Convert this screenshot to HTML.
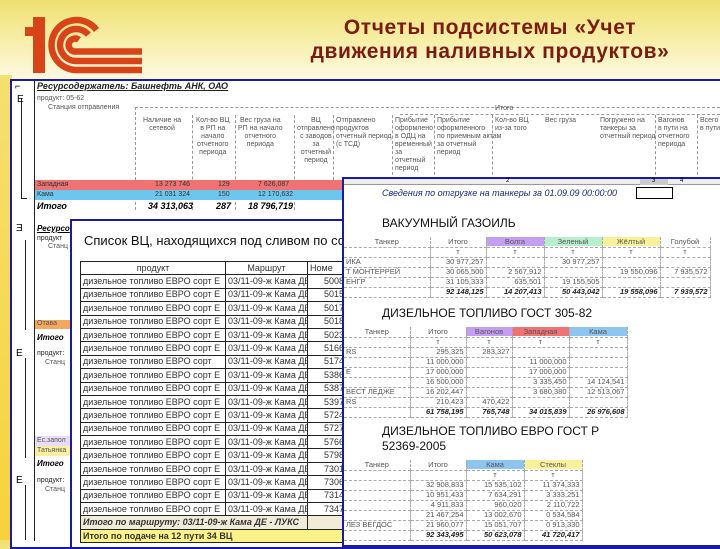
<!DOCTYPE html>
<html><head><meta charset="utf-8"><style>
*{margin:0;padding:0;box-sizing:border-box}
body{width:720px;height:540px;overflow:hidden;position:relative;font-family:"Liberation Sans",sans-serif;background:linear-gradient(180deg,#efe071 0%,#f7eea8 40px,#fcf8dc 75px,#fdf9e0 100%)}
.a{position:absolute;white-space:nowrap}
.s{font-size:7px;color:#555;line-height:8px}
.win{position:absolute;background:#fff;border:2px solid #1a1aa8}
.dl{position:absolute;border-top:1px dashed #999}
.dv{position:absolute;border-left:1px dashed #999}
table{border-collapse:collapse}
.lt td{border:1px solid #222;height:13.4px;font-size:9px;color:#333;padding:0 2px;overflow:hidden;white-space:nowrap;line-height:11px}
.tt td{font-size:7.5px;color:#555;height:10px;border-bottom:1px dashed #aaa;border-right:1px dashed #aaa;text-align:right;padding:0 2px;white-space:nowrap;line-height:8px}
.tt td.b{font-weight:bold;font-style:italic;color:#222}
</style></head><body>
<div class="a" style="left:0;top:75px;width:12px;height:465px;background:linear-gradient(#f5e070,#f7d23c)"></div>
<!-- logo -->
<svg class="a" style="left:0;top:0" width="150" height="80" viewBox="0 0 150 80">
<g fill="#d9431a">
<rect x="25" y="27" width="14" height="9"/>
<rect x="33" y="17" width="12" height="56"/>
</g>
<g fill="none" stroke="#d9431a" stroke-width="6.5">
<path d="M96.5 30 A25 25 0 1 0 76 70 L142 70"/>
<path d="M88.3 34.7 A16 16 0 1 0 76 61 L142 61"/>
<path d="M79 39.8 A6.5 6.5 0 1 0 76 51.5 L142 51.5"/>
</g></svg>
<div class="a" style="left:260px;top:16px;width:460px;text-align:center;font-size:21px;font-weight:bold;color:#7a1c14;line-height:24px;white-space:normal;letter-spacing:0.6px">Отчеты подсистемы «Учет<br>движения наливных продуктов»</div>

<!-- window 1 -->
<div class="win" style="left:10px;top:79px;width:712px;height:470px"></div>
<div class="a" style="left:34px;top:81px;width:1px;height:460px;background:#222"></div>
<div class="a s" style="left:15px;top:82px;color:#000;font-size:9px">⌐</div>
<div class="a" style="left:21px;top:98px;width:1px;height:100px;background:#222"></div>
<div class="a" style="left:21px;top:198px;width:6px;height:1px;background:#222"></div>
<div class="a" style="left:17px;top:94px;font-size:10px">E</div>
<div class="a" style="left:37px;top:81px;font-size:9px;font-style:italic;font-weight:bold;text-decoration:underline;color:#222">Ресурсодержатель: Башнефть АНК, ОАО</div>
<div class="a s" style="left:37px;top:95px">продукт: 05-62</div>
<div class="a s" style="left:48px;top:104px">Станция отправления</div>
<div class="dl" style="left:135px;top:107px;width:585px"></div>
<div class="dl" style="left:400px;top:114px;width:320px"></div>
<div class="a s" style="left:495px;top:105px">Итого</div>
<div class="dv" style="left:135px;top:107px;height:103px"></div>
<div class="dv" style="left:192px;top:115px;height:95px"></div>
<div class="dv" style="left:235px;top:115px;height:95px"></div>
<div class="dv" style="left:294px;top:115px;height:95px"></div>
<div class="dv" style="left:333px;top:115px;height:65px"></div>
<div class="dv" style="left:392px;top:115px;height:65px"></div>
<div class="dv" style="left:434px;top:115px;height:65px"></div>
<div class="dv" style="left:492px;top:115px;height:65px"></div>
<div class="dv" style="left:655px;top:115px;height:65px"></div>
<div class="dv" style="left:697px;top:115px;height:65px"></div>
<div class="a s" style="left:143px;top:117px;text-align:center">Наличие на<br>сетевой</div>
<div class="a s" style="left:196px;top:117px;text-align:center">Кол-во ВЦ<br>в РП на<br>начало<br>отчетного<br>периода</div>
<div class="a s" style="left:238px;top:117px;text-align:center">Вес груза на<br>РП на начало<br>отчетного<br>периода</div>
<div class="a s" style="left:297px;top:117px;text-align:center">ВЦ<br>отправлено<br>с заводов<br>за<br>отчетный<br>период</div>
<div class="a s" style="left:336px;top:117px">Отправлено<br>продуктов<br>отчетный период<br>(с ТСД)</div>
<div class="a s" style="left:395px;top:117px">Прибытие<br>оформлено<br>в ОДЦ на<br>временный<br>за<br>отчетный<br>период</div>
<div class="a s" style="left:437px;top:117px">Прибытие<br>оформленного<br>по приемным актам<br>за отчетный<br>период</div>
<div class="a s" style="left:495px;top:117px">Кол-во ВЦ<br>из-за того</div>
<div class="a s" style="left:545px;top:117px">Вес груза</div>
<div class="a s" style="left:600px;top:117px">Погружено на<br>танкеры за<br>отчетный период</div>
<div class="a s" style="left:658px;top:117px">Вагонов<br>в пути на<br>отчетного<br>периода</div>
<div class="a s" style="left:700px;top:117px">Всего<br>в пути</div>
<div class="a" style="left:35px;top:180px;width:310px;height:10px;background:#f07272"></div>
<div class="a" style="left:35px;top:190px;width:310px;height:10px;background:#6cc6ee"></div>
<div class="a s" style="left:37px;top:181px;color:#333">Западная</div>
<div class="a s" style="left:155px;top:181px;color:#333">13 273 746</div>
<div class="a s" style="left:218px;top:181px;color:#333">129</div>
<div class="a s" style="left:258px;top:181px;color:#333">7 626,087</div>
<div class="a s" style="left:37px;top:191px;color:#333">Кама</div>
<div class="a s" style="left:155px;top:191px;color:#333">21 031 324</div>
<div class="a s" style="left:218px;top:191px;color:#333">150</div>
<div class="a s" style="left:258px;top:191px;color:#333">12 170,632</div>
<div class="a" style="left:37px;top:201px;font-size:9px;font-weight:bold;font-style:italic">Итого</div>
<div class="a" style="left:148px;top:201px;font-size:9px;font-weight:bold;font-style:italic">34 313,063</div>
<div class="a" style="left:216px;top:201px;font-size:9px;font-weight:bold;font-style:italic">287</div>
<div class="a" style="left:248px;top:201px;font-size:9px;font-weight:bold;font-style:italic">18 796,719</div>
<!-- lower left gutter -->
<div class="a" style="left:16px;top:223px;font-size:10px">Ǝ</div>
<div class="a" style="left:37px;top:224px;font-size:8px;font-weight:bold;font-style:italic;text-decoration:underline">Ресурсо</div>
<div class="a s" style="left:37px;top:235px;color:#222">продукт</div>
<div class="a s" style="left:48px;top:243px">Станц</div>
<div class="a" style="left:25px;top:240px;width:1px;height:90px;background:#222"></div>
<div class="a" style="left:35px;top:320px;width:35px;height:9px;background:#f3a860"></div>
<div class="a s" style="left:37px;top:320px">Отава</div>
<div class="a" style="left:37px;top:333px;font-size:8px;font-weight:bold;font-style:italic">Итого</div>
<div class="a" style="left:16px;top:348px;font-size:10px">E</div>
<div class="a s" style="left:37px;top:350px;color:#222">продукт:</div>
<div class="a s" style="left:45px;top:359px">Станц</div>
<div class="a" style="left:25px;top:358px;width:1px;height:100px;background:#222"></div>
<div class="a" style="left:35px;top:436px;width:35px;height:10px;background:#e8dcf8"></div>
<div class="a" style="left:35px;top:446px;width:35px;height:10px;background:#f8f0a0"></div>
<div class="a s" style="left:37px;top:437px">Ес.запол</div>
<div class="a s" style="left:37px;top:447px">Татьянка</div>
<div class="a" style="left:37px;top:459px;font-size:8px;font-weight:bold;font-style:italic">Итого</div>
<div class="a" style="left:16px;top:475px;font-size:10px">E</div>
<div class="a s" style="left:37px;top:477px;color:#222">продукт:</div>
<div class="a s" style="left:45px;top:486px">Станц</div>
<div class="a" style="left:25px;top:485px;width:1px;height:55px;background:#222"></div>

<!-- window 2 -->
<div class="win" style="left:70px;top:219px;width:280px;height:330px"></div>
<div class="a" style="left:84px;top:233px;font-size:13px;color:#111">Список ВЦ, находящихся под сливом по состо</div>
<div class="a" style="left:80px;top:261px;width:268px;overflow:hidden">
<table class="lt" style="width:290px;table-layout:fixed">
<col style="width:145px"><col style="width:82px"><col style="width:63px">
<tr><td style="text-align:center;font-size:9px">продукт</td><td style="text-align:center">Маршрут</td><td>Номе</td></tr>
<tr><td>дизельное топливо ЕВРО сорт Е</td><td>03/11-09-ж Кама ДЕ</td><td style="text-align:right;padding-right:26px">5008</td></tr>
<tr><td>дизельное топливо ЕВРО сорт Е</td><td>03/11-09-ж Кама ДЕ</td><td style="text-align:right;padding-right:26px">5015</td></tr>
<tr><td>дизельное топливо ЕВРО сорт Е</td><td>03/11-09-ж Кама ДЕ</td><td style="text-align:right;padding-right:26px">5017</td></tr>
<tr><td>дизельное топливо ЕВРО сорт Е</td><td>03/11-09-ж Кама ДЕ</td><td style="text-align:right;padding-right:26px">5018</td></tr>
<tr><td>дизельное топливо ЕВРО сорт Е</td><td>03/11-09-ж Кама ДЕ</td><td style="text-align:right;padding-right:26px">5023</td></tr>
<tr><td>дизельное топливо ЕВРО сорт Е</td><td>03/11-09-ж Кама ДЕ</td><td style="text-align:right;padding-right:26px">5166</td></tr>
<tr><td>дизельное топливо ЕВРО сорт</td><td>03/11-09-ж Кама ДЕ</td><td style="text-align:right;padding-right:26px">5174</td></tr>
<tr><td>дизельное топливо ЕВРО сорт Е</td><td>03/11-09-ж Кама ДЕ</td><td style="text-align:right;padding-right:26px">5386</td></tr>
<tr><td>дизельное топливо ЕВРО сорт Е</td><td>03/11-09-ж Кама ДЕ</td><td style="text-align:right;padding-right:26px">5387</td></tr>
<tr><td>дизельное топливо ЕВРО сорт Е</td><td>03/11-09-ж Кама ДЕ</td><td style="text-align:right;padding-right:26px">5397</td></tr>
<tr><td>дизельное топливо ЕВРО сорт Е</td><td>03/11-09-ж Кама ДЕ</td><td style="text-align:right;padding-right:26px">5724</td></tr>
<tr><td>дизельное топливо ЕВРО сорт Е</td><td>03/11-09-ж Кама ДЕ</td><td style="text-align:right;padding-right:26px">5727</td></tr>
<tr><td>дизельное топливо ЕВРО сорт Е</td><td>03/11-09-ж Кама ДЕ</td><td style="text-align:right;padding-right:26px">5766</td></tr>
<tr><td>дизельное топливо ЕВРО сорт Е</td><td>03/11-09-ж Кама ДЕ</td><td style="text-align:right;padding-right:26px">5798</td></tr>
<tr><td>дизельное топливо ЕВРО сорт Е</td><td>03/11-09-ж Кама ДЕ</td><td style="text-align:right;padding-right:26px">7301</td></tr>
<tr><td>дизельное топливо ЕВРО сорт Е</td><td>03/11-09-ж Кама ДЕ</td><td style="text-align:right;padding-right:26px">7306</td></tr>
<tr><td>дизельное топливо ЕВРО сорт Е</td><td>03/11-09-ж Кама ДЕ</td><td style="text-align:right;padding-right:26px">7314</td></tr>
<tr><td>дизельное топливо ЕВРО сорт Е</td><td>03/11-09-ж Кама ДЕ</td><td style="text-align:right;padding-right:26px">7347</td></tr>
<tr style="background:#f1ecd8"><td colspan="2" style="font-weight:bold;font-style:italic">Итого по маршруту: 03/11-09-ж Кама ДЕ - ЛУКС</td><td></td></tr>
<tr style="background:#fbf28a"><td colspan="3" style="font-weight:bold">Итого по подаче на 12 пути 34 ВЦ</td></tr>
</table></div>

<!-- window 3 -->
<div class="win" style="left:342px;top:177px;width:380px;height:370px"></div>
<div class="a" style="left:344px;top:179px;width:376px;height:6px;background:#eee;border-bottom:1px solid #999"></div>
<div class="a" style="left:640px;top:179px;width:28px;height:6px;background:#ccc"></div>
<div class="a" style="left:506px;top:178px;font-size:6px">2</div>
<div class="a" style="left:652px;top:178px;font-size:6px">3</div>
<div class="a" style="left:680px;top:178px;font-size:6px">4</div>
<div class="a" style="left:382px;top:188px;font-size:9px;font-style:italic;color:#1a2a7a">Сведения по отгрузке на танкеры за 01.09.09 00:00:00</div>
<div class="a" style="left:636px;top:187px;width:37px;height:12px;border:1.5px solid #000"></div>
<div class="a" style="left:382px;top:216px;font-size:12px;color:#111">ВАКУУМНЫЙ ГАЗОИЛЬ</div>
<div class="a" style="left:486px;top:237px;width:58px;height:9px;background:#c49ef0"></div>
<div class="a" style="left:544px;top:237px;width:58px;height:9px;background:#b6efcc"></div>
<div class="a" style="left:602px;top:237px;width:58px;height:9px;background:#f7f29a"></div>
<table class="tt a" style="left:344px;top:237px">
<col style="width:86px"><col style="width:56px"><col style="width:58px"><col style="width:58px"><col style="width:58px"><col style="width:50px">
<tr><td style="text-align:center">Танкер</td><td style="text-align:center">Итого</td><td style="text-align:center">Волга</td><td style="text-align:center">Зеленый</td><td style="text-align:center">Жёлтый</td><td style="text-align:center">Голубой</td></tr>
<tr><td></td><td style="text-align:center">т</td><td style="text-align:center">т</td><td style="text-align:center">т</td><td style="text-align:center">т</td><td style="text-align:center">т</td></tr>
<tr><td style="text-align:left">ИКА</td><td>30 977,257</td><td></td><td>30 977,257</td><td></td><td></td></tr>
<tr><td style="text-align:left">Т МОНТЕРРЕЙ</td><td>30 065,500</td><td>2 567,912</td><td></td><td>19 550,096</td><td>7 935,572</td></tr>
<tr><td style="text-align:left">ЕНГР</td><td>31 105,333</td><td>635,501</td><td>19 155,505</td><td></td><td></td></tr>
<tr><td></td><td class="b">92 148,125</td><td class="b">14 207,413</td><td class="b">50 443,042</td><td class="b">19 558,096</td><td class="b">7 939,572</td></tr>
</table>
<div class="a" style="left:382px;top:306px;font-size:12px;color:#111">ДИЗЕЛЬНОЕ ТОПЛИВО ГОСТ 305-82</div>
<div class="a" style="left:466px;top:327px;width:46px;height:9px;background:#c49ef0"></div>
<div class="a" style="left:512px;top:327px;width:57px;height:9px;background:#f07272"></div>
<div class="a" style="left:569px;top:327px;width:58px;height:9px;background:#8cc6f0"></div>
<table class="tt a" style="left:344px;top:327px">
<col style="width:66px"><col style="width:56px"><col style="width:46px"><col style="width:57px"><col style="width:58px">
<tr><td style="text-align:center">Танкер</td><td style="text-align:center">Итого</td><td style="text-align:center">Вагонов</td><td style="text-align:center">Западная</td><td style="text-align:center">Кама</td></tr>
<tr><td></td><td style="text-align:center">т</td><td style="text-align:center">т</td><td style="text-align:center">т</td><td style="text-align:center">т</td></tr>
<tr><td style="text-align:left">RS</td><td>295,325</td><td>283,327</td><td></td><td></td></tr>
<tr><td></td><td>11 000,000</td><td></td><td>11 000,000</td><td></td></tr>
<tr><td style="text-align:left">Е</td><td>17 000,000</td><td></td><td>17 000,000</td><td></td></tr>
<tr><td></td><td>16 500,000</td><td></td><td>3 335,450</td><td>14 124,541</td></tr>
<tr><td style="text-align:left">ВЕСТ ЛЕДЖЕ</td><td>16 202,447</td><td></td><td>3 680,380</td><td>12 513,067</td></tr>
<tr><td style="text-align:left">RS</td><td>210,423</td><td>470,422</td><td></td><td></td></tr>
<tr><td></td><td class="b">61 758,195</td><td class="b">765,748</td><td class="b">34 015,839</td><td class="b">26 976,608</td></tr>
</table>
<div class="a" style="left:382px;top:424px;font-size:12px;color:#111;line-height:15px">ДИЗЕЛЬНОЕ ТОПЛИВО ЕВРО ГОСТ Р<br>52369-2005</div>
<div class="a" style="left:466px;top:460px;width:58px;height:9px;background:#8cc6f0"></div>
<div class="a" style="left:524px;top:460px;width:58px;height:9px;background:#f7f29a"></div>
<table class="tt a" style="left:344px;top:460px">
<col style="width:66px"><col style="width:56px"><col style="width:58px"><col style="width:58px">
<tr><td style="text-align:center">Танкер</td><td style="text-align:center">Итого</td><td style="text-align:center">Кама</td><td style="text-align:center">Стеклы</td></tr>
<tr><td></td><td></td><td style="text-align:center">т</td><td style="text-align:center">т</td></tr>
<tr><td></td><td>32 908,833</td><td>15 535,102</td><td>11 374,333</td></tr>
<tr><td></td><td>10 951,433</td><td>7 634,291</td><td>3 333,251</td></tr>
<tr><td></td><td>4 911,833</td><td>960,020</td><td>2 110,722</td></tr>
<tr><td></td><td>21 467,254</td><td>13 002,670</td><td>0 534,584</td></tr>
<tr><td style="text-align:left">ЛЕЗ ВЕГДОС</td><td>21 960,077</td><td>15 051,707</td><td>0 913,330</td></tr>
<tr><td></td><td class="b">92 343,495</td><td class="b">50 623,078</td><td class="b">41 720,417</td></tr>
</table>
</body></html>
